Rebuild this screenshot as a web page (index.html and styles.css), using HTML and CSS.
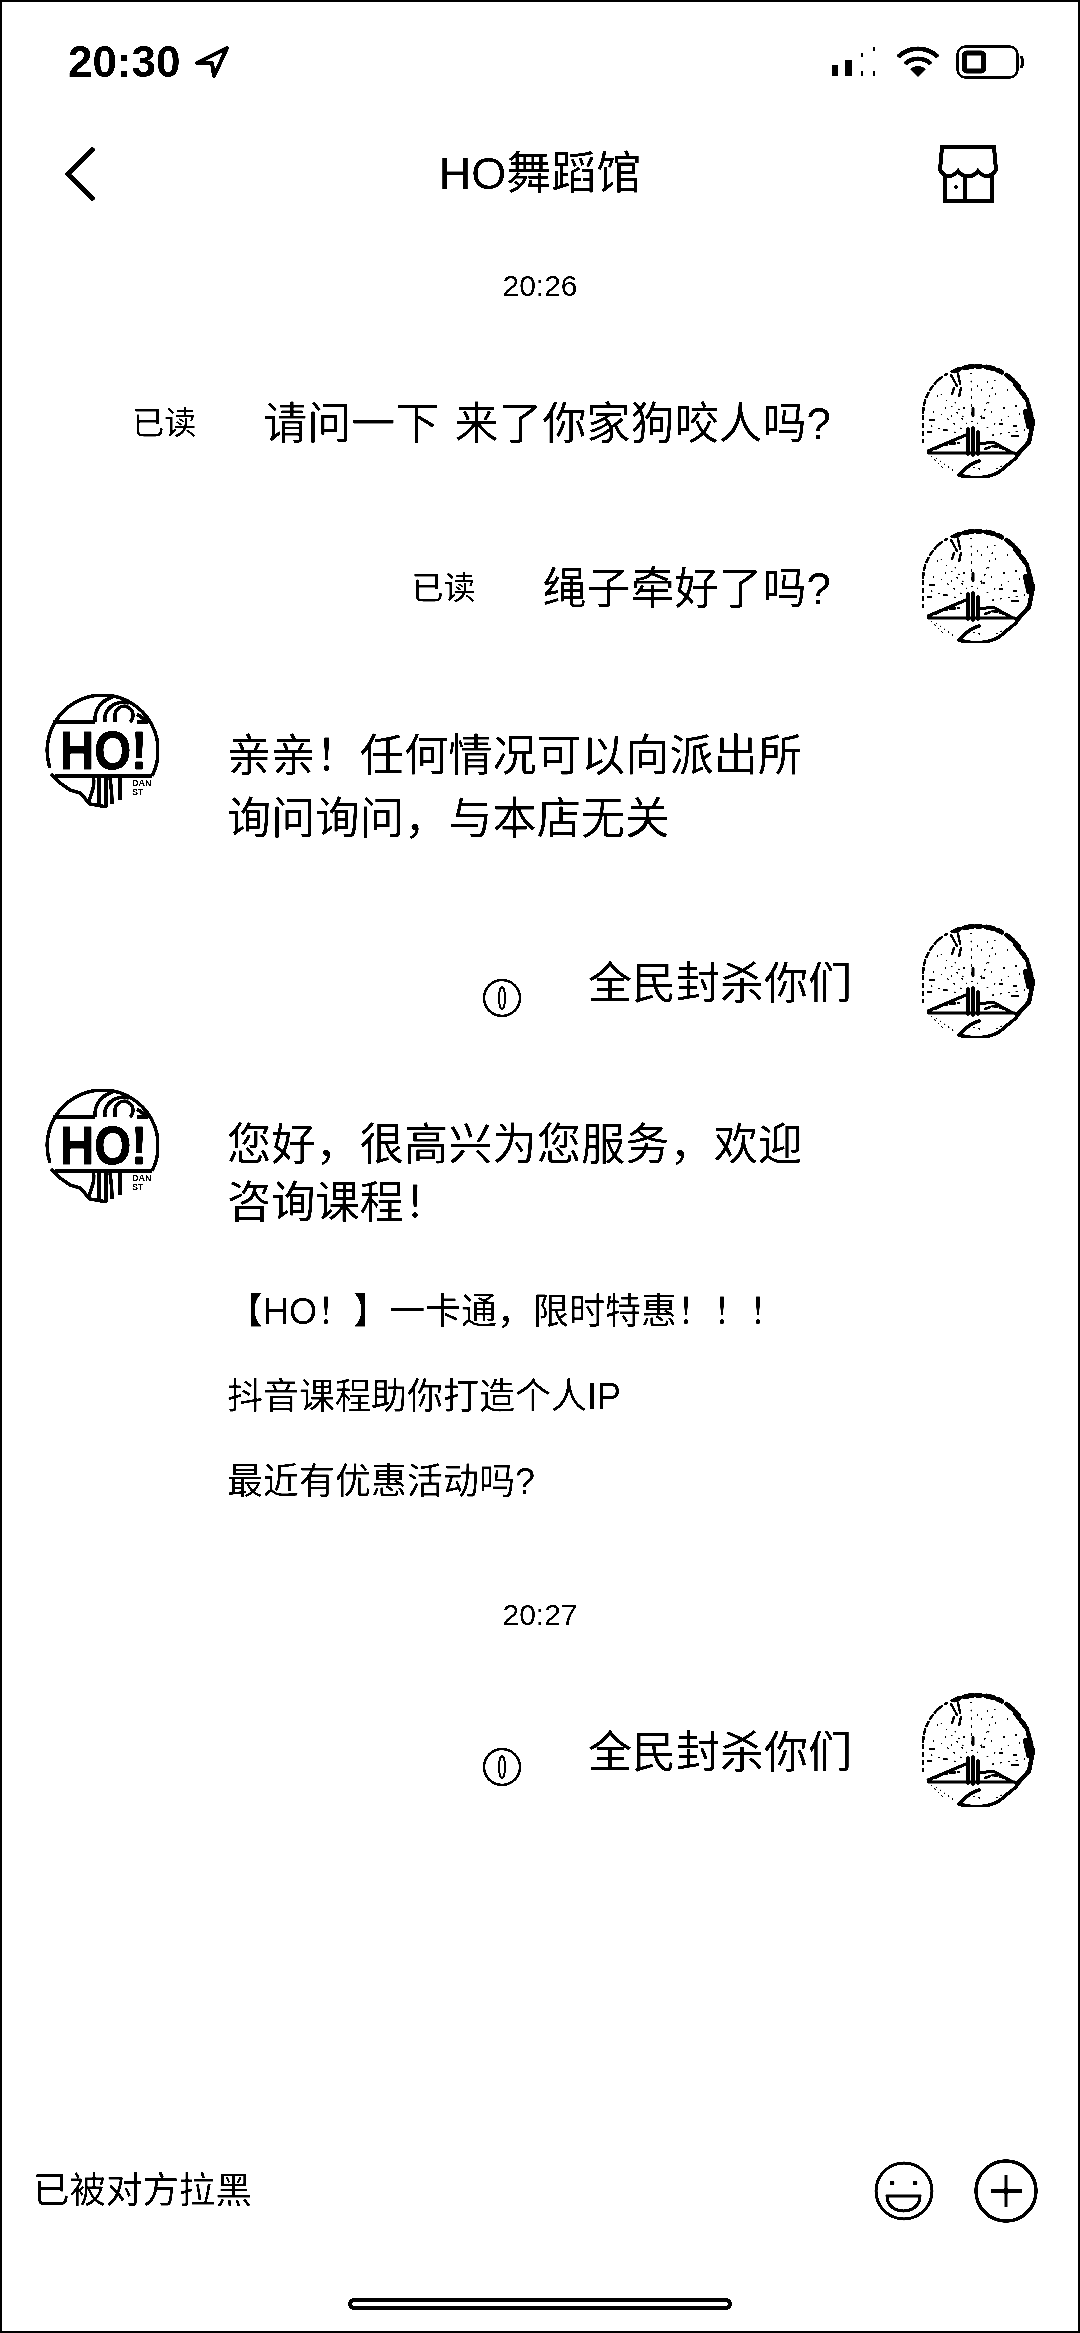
FILE: index.html
```html
<!DOCTYPE html>
<html lang="zh">
<head>
  <meta charset="UTF-8"/>
  <title>HO舞蹈馆</title>
  <link rel="stylesheet" href="styles.css">
</head>
<body>

<svg class="sprite">
  <symbol id="av-user" viewBox="0 0 114 114">
    <g fill="none" stroke="#000" stroke-linecap="round">
      <path d="M17 16C28 7 42 2 58 2C78 2 96 17 106 34" stroke-width="2.500" stroke-dasharray="5 4 2 5"/>
      <path d="M34 7C46 2 60 0 76 6C86 10 94 17 100 26" stroke-width="5" stroke-dasharray="4 6 8 4"/>
      <path d="M94 20L106 36L112 58L108 78L96 91" stroke-width="4.500" stroke-dasharray="6 3 3 3"/>
      <path d="M105 48L108 62" stroke-width="6" stroke-dasharray="3 3"/>
      <path d="M17 16C8 25 2 37 2 50" stroke-width="2.500" stroke-dasharray="5 3"/>
      <path d="M2 44V78" stroke-width="2.500" stroke-dasharray="3 5"/>
      <path d="M30 11L36 22M37 10L39 20M33 24L31 30M40 24L38 33" stroke-width="2.500" stroke-dasharray="3 2"/>
      <path d="M52 44V52" stroke-width="3"/>
      <path d="M7 87L45 71M58 80L72 78L92 89M7 89H94" stroke-width="3"/>
      <path d="M47 65V90M52 64V91M57 68V90" stroke-width="3.500"/>
      <path d="M14 85L22 81L38 79M64 85L72 82L84 85" stroke-width="2.500" stroke-dasharray="5 3"/>
      <path d="M38 111C44 104 50 99 58 97M38 111C50 115 66 115 78 108L95 94" stroke-width="3.500"/>
      <path d="M50 9L51 60M34 38L47 62M68 38L56 60M20 50L42 66M88 52L62 66M10 62L40 70M104 66L66 72M74 16L60 56M20 30L44 58" stroke-width="1.300" stroke-dasharray="1 7"/>
      <path d="M15 94L34 108M90 98L72 106M48 102L62 106M10 92L22 104" stroke-width="1.300" stroke-dasharray="1 4"/>
      <path d="M16 32h1M24 44h1M30 52h1M42 44h2M60 26h1M66 18h1M74 30h1M82 44h2M92 62h4M78 60h4M62 54h2M22 66h4M12 48h1M98 50h1M86 26h1M70 48h1M8 56h6M6 68h5M90 72h8M94 42h2M56 22h1" stroke-width="1.400"/>
    </g>
  </symbol>

  <symbol id="av-shop" viewBox="0 0 114 114">
    <g fill="none" stroke="#000" stroke-width="3.500">
      <path d="M107 82A55.500 55.500 0 1 0 5 74"/>
      <path d="M6 80L15 89L25 96L35 99L45 110L62 113"/>
      <path d="M8 28H50M92 28H103M10 82H107"/>
      <path d="M50 28C49 15 57 6 68 3M60 28C58 15 70 6 84 9M70 28V22A9 9 0 1 1 85 28"/>
      <path d="M92 20L103 28"/>
      <path d="M48 82C51 92 46 98 44 108M54 84V113M61 84V113M65 84C66 92 67 96 67 110M75 84V106"/>
    </g>
    <text class="av-logo" x="15" y="75" textLength="87" lengthAdjust="spacingAndGlyphs">HO!</text>
    <text class="av-small" x="87" y="92">DAN</text>
    <text class="av-small" x="87" y="101">ST</text>
  </symbol>

  <symbol id="pin" viewBox="0 0 40 40">
    <circle cx="20" cy="20" r="18" fill="none" stroke="#000" stroke-width="2.500"/>
    <ellipse cx="20" cy="20" rx="3" ry="11" fill="none" stroke="#000" stroke-width="1.800"/>
  </symbol>
</svg>

<div class="screen">

  <div class="status">
    <div class="status-left">
      <span class="clock">20:30</span>
      <svg class="ico-loc" viewBox="0 0 34 32"><path d="M32 2L2 17H17L19 30Z" fill="none" stroke="#000" stroke-width="4" stroke-linejoin="round"/></svg>
    </div>
    <div class="status-right">
      <svg class="ico-signal" viewBox="0 0 48 32">
        <rect x="0" y="19" width="6" height="11" rx="1"/>
        <rect x="13" y="14" width="7" height="16" rx="1"/>
        <path d="M30 7v4M30 25v5M42 1v4M42 25v5" stroke="#000" stroke-width="1.200" fill="none"/>
      </svg>
      <svg class="ico-wifi" viewBox="0 0 44 32">
        <g fill="none" stroke="#000" stroke-width="4.500">
          <path d="M2 11C13 0 31 0 42 11"/>
          <path d="M9 18C16 11 28 11 35 18"/>
        </g>
        <path d="M14 23C19 19 25 19 30 23L22 31Z"/>
      </svg>
      <svg class="ico-batt" viewBox="0 0 68 34">
        <rect x="1.500" y="1.500" width="60" height="31" rx="8" fill="none" stroke="#000" stroke-width="2.500"/>
        <rect x="8.500" y="8" width="19" height="18" rx="2" fill="none" stroke="#000" stroke-width="5"/>
        <path d="M65 11C67 14 67 20 65 23" fill="none" stroke="#000" stroke-width="3"/>
      </svg>
    </div>
  </div>

  <div class="nav">
    <svg class="ico-back" viewBox="0 0 32 56"><path d="M29 2L3 28L29 54" fill="none" stroke="#000" stroke-width="4.500"/></svg>
    <h1 class="title">HO舞蹈馆</h1>
    <svg class="ico-store" viewBox="0 0 60 58">
      <g fill="none" stroke="#000" stroke-width="4">
        <path d="M4 2H56L58 25C52 33 46 33 40 26C35 33 25 33 20 26C14 33 7 33 2 25Z"/>
        <path d="M7 30V56H54V30M27 31V56"/>
      </g>
      <circle cx="18" cy="42" r="2"/>
    </svg>
  </div>

  <div class="stamp stamp-first">20:26</div>

  <div class="row row-me">
    <svg class="avatar"><use href="#av-user"/></svg>
    <p class="msg msg-wide">请问一下 来了你家狗咬人吗?</p>
    <span class="read">已读</span>
  </div>

  <div class="row row-me">
    <svg class="avatar"><use href="#av-user"/></svg>
    <p class="msg msg-wide">绳子牵好了吗?</p>
    <span class="read">已读</span>
  </div>

  <div class="row row-shop">
    <svg class="avatar"><use href="#av-shop"/></svg>
    <p class="msg msg-multi">亲亲！任何情况可以向派出所<br>询问询问，与本店无关</p>
  </div>

  <div class="row row-me row-after-multi">
    <svg class="avatar"><use href="#av-user"/></svg>
    <p class="msg">全民封杀你们</p>
    <svg class="pin"><use href="#pin"/></svg>
  </div>

  <div class="row row-shop row-welcome">
    <svg class="avatar"><use href="#av-shop"/></svg>
    <div class="welcome">
      <p class="msg msg-tight">您好，很高兴为您服务，欢迎<br>咨询课程！</p>
      <ul class="faq">
        <li>【HO！】一卡通，限时特惠！！！</li>
        <li>抖音课程助你打造个人IP</li>
        <li>最近有优惠活动吗?</li>
      </ul>
    </div>
  </div>

  <div class="stamp stamp-second">20:27</div>

  <div class="row row-me">
    <svg class="avatar"><use href="#av-user"/></svg>
    <p class="msg">全民封杀你们</p>
    <svg class="pin"><use href="#pin"/></svg>
  </div>

  <div class="inputbar">
    <span class="blocked">已被对方拉黑</span>
    <svg class="ico-smile" viewBox="0 0 60 60">
      <circle cx="30" cy="30" r="28" fill="none" stroke="#000" stroke-width="3"/>
      <circle cx="18" cy="22" r="2.500"/>
      <circle cx="41" cy="22" r="2.500"/>
      <path d="M13 35H46C46 55 13 55 13 35Z" fill="none" stroke="#000" stroke-width="3"/>
    </svg>
    <svg class="ico-plus" viewBox="0 0 64 64">
      <circle cx="32" cy="32" r="30" fill="none" stroke="#000" stroke-width="3.500"/>
      <path d="M17 32H48" stroke="#000" stroke-width="4.500"/>
      <path d="M32 16V48" stroke="#000" stroke-width="3"/>
    </svg>
  </div>

  <div class="home-bar"></div>
</div>

</body>
</html>
```

FILE: styles.css
```css
*,*::before,*::after{box-sizing:border-box;margin:0;padding:0;}
body{font-family:"Liberation Sans","Noto Sans CJK SC",sans-serif;background:#fff;color:#000;overflow:hidden;}
.sprite{display:none;}

/* the shot is pure black and white, no greys */
.screen{width:1080px;height:2333px;border:2px solid #000;display:flex;flex-direction:column;background:#fff;filter:contrast(6);}

/* status bar */
.status{height:117px;padding:43px 54px 0 66px;display:flex;justify-content:space-between;align-items:flex-start;}
.status-left{display:flex;align-items:center;gap:14px;}
.clock{font-size:44px;line-height:34px;font-weight:700;}
.ico-loc{width:34px;height:32px;}
.status-right{display:flex;align-items:center;}
.ico-signal{width:48px;height:32px;margin-right:16px;}
.ico-wifi{width:44px;height:32px;margin-right:16px;}
.ico-batt{width:68px;height:34px;}

/* nav */
.nav{height:110px;padding:0 80px;display:grid;grid-template-columns:1fr auto 1fr;align-items:center;}
.ico-back{width:32px;height:56px;margin-left:-17px;}
.title{font-size:45px;font-weight:400;line-height:60px;}
.ico-store{width:60px;height:58px;justify-self:end;}

.stamp{font-size:30px;line-height:36px;text-align:center;}
.stamp-first{margin-top:39px;margin-bottom:60px;}
.stamp-second{margin-top:90px;margin-bottom:60px;}

/* messages */
.row{display:flex;align-items:center;margin-bottom:51px;}
.row-me{flex-direction:row-reverse;padding-right:43px;}
.row-shop{padding-left:43px;align-items:flex-start;}
.row-after-multi{margin-top:23px;}
.row-welcome{margin-bottom:0;}
.avatar{width:114px;height:114px;flex:none;}
.msg{font-size:44px;line-height:62px;padding-top:6px;margin-right:69px;white-space:nowrap;word-spacing:3px;}
.msg-wide{margin-right:90px;}
.row-shop .msg{margin:0 0 0 68px;padding-top:30px;font-size:44.250px;line-height:63px;}
.row-shop .msg-tight{margin:0;padding-top:27px;line-height:58px;}
.row-me .read{font-size:32px;line-height:36px;margin-right:67px;padding-top:4px;}
.pin{width:40px;height:40px;margin:33px 66px 0 0;}

.welcome{margin-left:68px;}
.faq{list-style:none;margin-top:55px;font-size:36px;line-height:50px;display:flex;flex-direction:column;gap:35px;}

/* bottom */
.inputbar{margin-top:auto;padding:0 40px 0 31px;display:flex;align-items:center;}
.blocked{font-size:36.500px;line-height:48px;margin-right:auto;}
.ico-smile{width:60px;height:60px;margin-right:40px;}
.ico-plus{width:64px;height:64px;}
.home-bar{width:384px;height:12px;border:4px solid #000;border-radius:6px;margin:75px auto 21px;}

.av-logo{font-family:"Liberation Sans",sans-serif;font-weight:700;font-size:54px;stroke:#000;stroke-width:.8px;}
.av-small{font-family:"Liberation Sans",sans-serif;font-weight:700;font-size:9px;}
```
